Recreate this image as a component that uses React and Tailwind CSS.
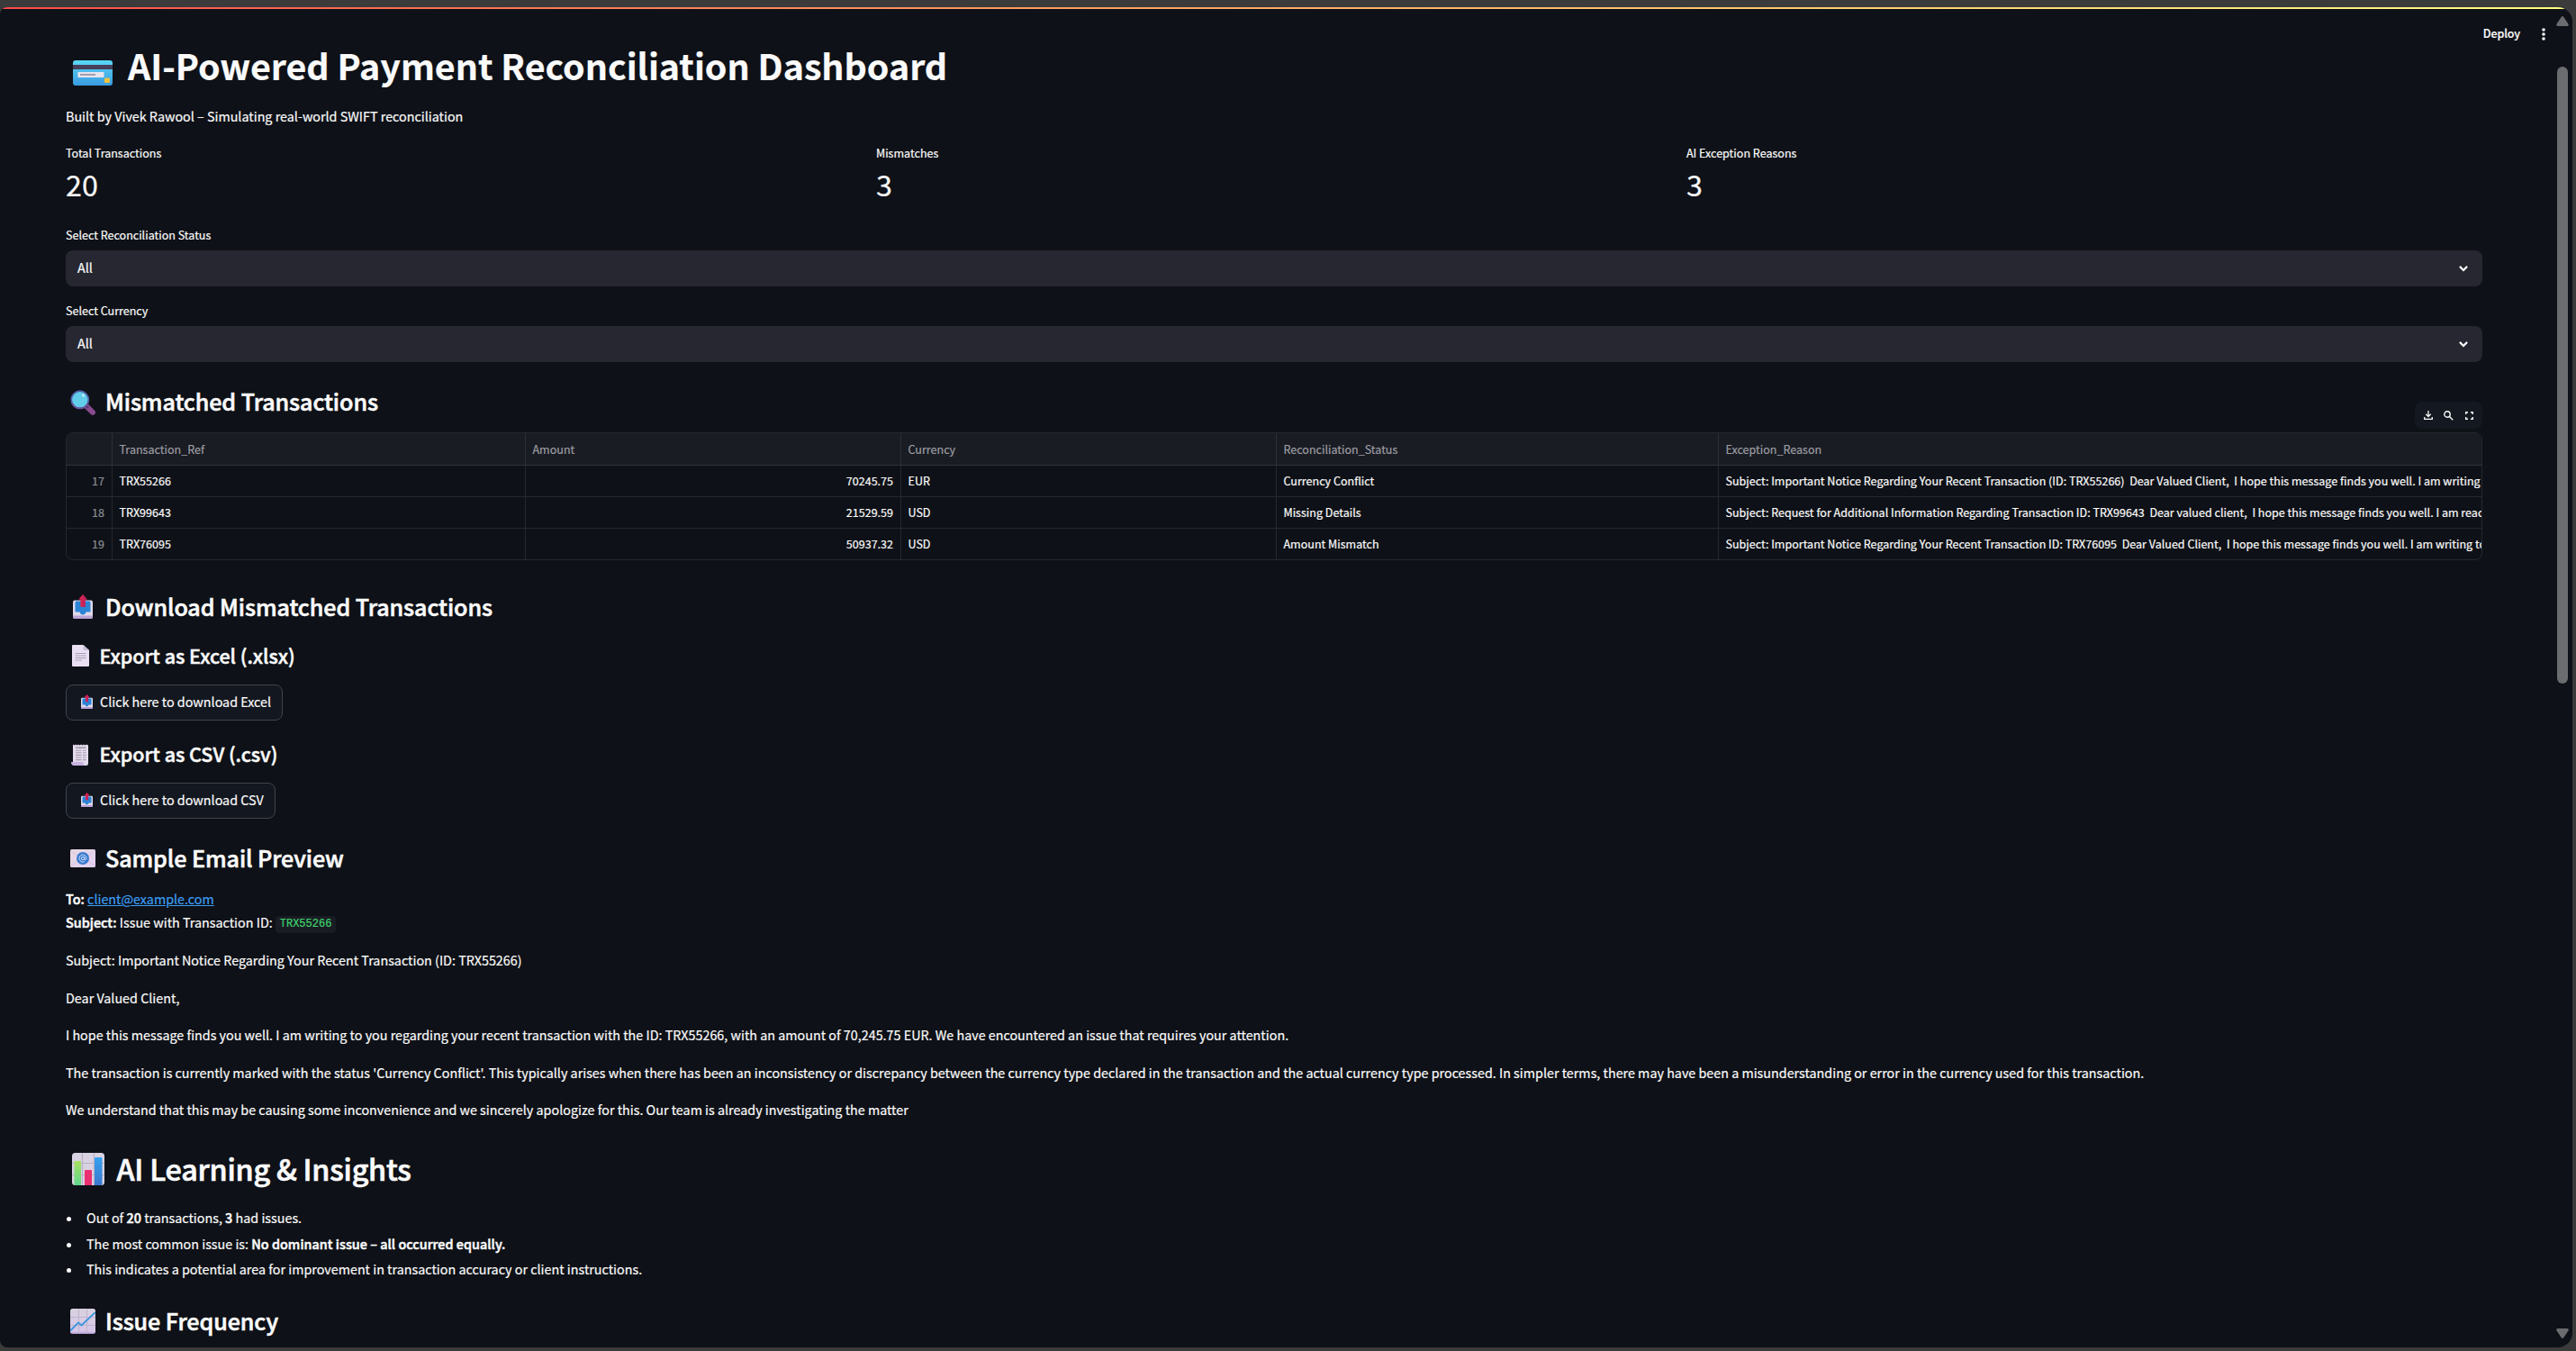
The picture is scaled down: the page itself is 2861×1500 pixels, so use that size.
import React from 'react';

function CardIcon() {
  return (
    <svg width="44" height="28" viewBox="0 0 44 28" className="ml-2 mt-[25px]">
      <defs>
        <linearGradient id="card" x1="0" y1="0" x2="0" y2="1">
          <stop offset="0" stopColor="#5ad8f5" />
          <stop offset="1" stopColor="#3a9be0" />
        </linearGradient>
      </defs>
      <rect width="44" height="28" rx="3" fill="url(#card)" />
      <rect y="5" width="44" height="5" fill="#46405a" />
      <rect x="5.5" y="13" width="29" height="6" rx="0.6" fill="#e6e4ee" />
      <rect x="8" y="15" width="17" height="1.8" fill="#9d98a8" />
      <rect x="35" y="19.5" width="6" height="5.5" rx="1.6" fill="#f5c33b" />
    </svg>
  );
}

function LensIcon() {
  return (
    <svg width="28" height="28" viewBox="0 0 28 28" className="ml-[5px] mt-[5px]">
      <path d="M18.5 18.5 L25 24.8" stroke="#8a4a8e" strokeWidth="6" strokeLinecap="round" />
      <path d="M17 17 L20 20" stroke="#5c3b78" strokeWidth="3" />
      <circle cx="10.8" cy="10.8" r="9.6" fill="#62cdea" stroke="#4d5fa6" strokeWidth="1.8" />
      <path d="M2 14.5 A9.6 9.6 0 0 0 19.5 14.8" fill="none" stroke="#70509a" strokeWidth="1.8" />
      <circle cx="14.6" cy="6" r="1.7" fill="#b4edf9" />
    </svg>
  );
}

function TrayIcon({ className, width, height }) {
  return (
    <svg width={width} height={height} viewBox="0 0 22 27" className={className}>
      <rect y="6.5" width="22" height="20.5" rx="2" fill="#e0d9ea" />
      <path d="M0 23.5 H22 V25 a2 2 0 0 1 -2 2 H2 a2 2 0 0 1 -2 -2 z" fill="#b9a3d3" />
      <path d="M2.5 9 a1.5 1.5 0 0 1 1.500 -1.500 H18 a1.500 1.500 0 0 1 1.500 1.500 V19.500 H14.500 C14 21.500 13 22.500 11 22.500 S8 21.500 7.500 19.500 H2.500 z" fill="#2b84d6" />
      <path d="M11 0 L15.800 5.600 H13.600 V13.800 H8.400 V5.600 H6.200 z" fill="#d9234f" />
      <path d="M11 0 L15.800 5.600 H13.600 V13.800 H11 z" fill="#c3215f" />
    </svg>
  );
}

function PageIcon() {
  return (
    <svg width="19" height="24" viewBox="0 0 19 24" className="ml-[7px] mt-[3px]">
      <path d="M1 0 H12.500 L19 6 V23 a1 1 0 0 1 -1 1 H1 a1 1 0 0 1 -1 -1 V1 a1 1 0 0 1 1 -1 z" fill="#e9e0f4" />
      <path d="M12.500 0 L19 6 H13.500 a1 1 0 0 1 -1 -1 z" fill="#c8bdd8" />
      <path d="M3.500 9.500 H15.500 M3.500 12 H15.500 M3.500 14.500 H15.500 M3.500 17 H11" stroke="#a89fb5" strokeWidth="1.100" />
    </svg>
  );
}

function ReceiptIcon() {
  return (
    <svg width="19" height="24" viewBox="0 0 19 24" className="ml-[6px] mt-1">
      <path d="M2 0.500 L3.500 1.500 L5 0.500 L6.500 1.500 L8 0.500 L9.500 1.500 L11 0.500 L12.500 1.500 L14 0.500 L15.500 1.500 L17 0.500 L19 1.500 V21.500 a2.500 2.500 0 0 1 -2.500 2.500 H4 L2 20 z" fill="#e4dcee" />
      <path d="M0 20 H13.500 C13.500 22.500 14.500 24 16.500 24 H3 C1 24 0 22.500 0 20 z" fill="#c9b3e2" />
      <path d="M5 4.200 H16.500" stroke="#8d8797" strokeWidth="1.300" />
      <path d="M5 7.200 H11.500 M13 7.200 H16.500 M5 9.800 H11.500 M13 9.800 H16.500 M5 12.400 H11.500 M13 12.400 H16.500 M5 15 H11.500 M13 15 H16.500 M5 17.600 H11.500 M13 17.600 H16.500" stroke="#a59eb0" strokeWidth="1.100" />
    </svg>
  );
}

function MailIcon() {
  return (
    <svg width="28" height="20" viewBox="0 0 28 20" className="ml-[5px] mt-2">
      <defs>
        <linearGradient id="mail" x1="0" y1="0" x2="1" y2="1">
          <stop offset="0" stopColor="#e9d9e0" />
          <stop offset="1" stopColor="#e2d0f5" />
        </linearGradient>
      </defs>
      <rect width="28" height="20" rx="1.500" fill="url(#mail)" />
      <path d="M0 1 L10 9 M28 1 L18 9 M0 19 L10 11 M28 19 L18 11" stroke="#cfc0dd" strokeWidth="0.800" />
      <circle cx="14" cy="10" r="7" fill="#3a7bd0" />
      <circle cx="14" cy="10" r="1.700" fill="none" stroke="#dfeafc" strokeWidth="0.900" />
      <path d="M15.700 8.300 V10.800 C15.700 12.200 18 12 18 10 A4 4 0 1 0 15.800 13.600" fill="none" stroke="#dfeafc" strokeWidth="0.900" />
    </svg>
  );
}

function BarsIcon() {
  return (
    <svg width="36" height="36" viewBox="0 0 36 36" className="ml-[7px] mt-[6px]">
      <defs>
        <linearGradient id="barG" x1="0" y1="0" x2="0" y2="1">
          <stop offset="0" stopColor="#a8e05f" />
          <stop offset="1" stopColor="#5fd68e" />
        </linearGradient>
        <linearGradient id="barB" x1="0" y1="0" x2="0" y2="1">
          <stop offset="0" stopColor="#35a3f0" />
          <stop offset="1" stopColor="#3b78cc" />
        </linearGradient>
      </defs>
      <rect width="36" height="36" rx="3.500" fill="#d9d2e2" />
      <path d="M11.500 0 V36 M24.500 0 V36 M0 11.500 H36 M0 24.500 H36" stroke="#b9b0c4" strokeWidth="1.200" />
      <path d="M2.500 10 a1 1 0 0 1 1 -1 H9 a1 1 0 0 1 1 1 V36 H3.500 a1 1 0 0 1 -1 -1 z" fill="url(#barG)" />
      <path d="M14 20 a1 1 0 0 1 1 -1 H21 a1 1 0 0 1 1 1 V36 H14 z" fill="#ec2f70" />
      <path d="M25 6 a1 1 0 0 1 1 -1 H32.500 a1 1 0 0 1 1 1 V35 a1 1 0 0 1 -1 1 H25 z" fill="url(#barB)" />
    </svg>
  );
}

function TrendIcon() {
  return (
    <svg width="28" height="28" viewBox="0 0 28 28" className="ml-[5px] mt-1">
      <defs>
        <linearGradient id="trend" x1="0" y1="0" x2="0" y2="1">
          <stop offset="0" stopColor="#d9d2df" />
          <stop offset="0.900" stopColor="#d6c6e8" />
          <stop offset="1" stopColor="#b095cf" />
        </linearGradient>
        <clipPath id="trendClip">
          <rect width="28" height="28" rx="2.500" />
        </clipPath>
      </defs>
      <g clipPath="url(#trendClip)">
        <rect width="28" height="28" fill="url(#trend)" />
        <path d="M9.500 0 V28 M18.500 0 V28 M0 9.500 H28 M0 18.500 H28" stroke="#bfb4cb" strokeWidth="1" />
        <path d="M0 24.500 L9 15.500 L12.500 18.500 L28 4" fill="none" stroke="#3f97dc" strokeWidth="2" />
      </g>
    </svg>
  );
}

function Select({ label }) {
  return (
    <div>
      <div className="h-[19px] text-[12.54px] leading-[19px]">{label}</div>
      <div className="mt-2 flex h-10 items-center justify-between rounded-lg bg-[#262730] pl-[13px] pr-4">
        <span className="pb-0.5 text-[14.34px] leading-6">All</span>
        <svg width="10" height="7" viewBox="0 0 10 7">
          <path d="M0.900 0.900 L5 5 L9.100 0.900" fill="none" stroke="#fafafa" strokeWidth="2.200" />
        </svg>
      </div>
    </div>
  );
}

function Metric({ label, value }) {
  return (
    <div>
      <div className="h-5 text-[12.54px] leading-5">{label}</div>
      <div className="mt-1 h-10 text-[32.26px] leading-10">{value}</div>
    </div>
  );
}

function Heading({ icon, children, className }) {
  return (
    <h3
      className={
        'flex h-[34px] text-[25.1px] leading-[34px] font-medium tracking-[-0.003em] [-webkit-text-stroke:0.6px] ' + className
      }
    >
      <span className="w-11 shrink-0">{icon}</span>
      {children}
    </h3>
  );
}

function SubHeading({ icon, children, className }) {
  return (
    <h4
      className={
        'flex h-[30px] text-[21.5px] leading-[30px] font-medium tracking-[-0.001em] [-webkit-text-stroke:0.5px] ' + className
      }
    >
      <span className="w-[37.500px] shrink-0">{icon}</span>
      {children}
    </h4>
  );
}

function Strong({ children }) {
  return <b className="font-medium tracking-[0.003em] [-webkit-text-stroke:0.5px]">{children}</b>;
}

function DownloadButton({ children, className }) {
  return (
    <button
      className={
        'mt-[17px] flex h-10 rounded-lg border border-[#41444c] bg-[#13171f] text-[14.34px] leading-[36px] ' + className
      }
    >
      <TrayIcon className="ml-4 mt-[10px]" width="13" height="16" />
      <span className="ml-2">{children}</span>
    </button>
  );
}

const rows = [
  ['17', 'TRX55266', '70245.75', 'EUR', 'Currency Conflict', 'Subject: Important Notice Regarding Your Recent Transaction (ID: TRX55266)  Dear Valued Client,  I hope this message finds you well. I am writing to'],
  ['18', 'TRX99643', '21529.59', 'USD', 'Missing Details', 'Subject: Request for Additional Information Regarding Transaction ID: TRX99643  Dear valued client,  I hope this message finds you well. I am reaching'],
  ['19', 'TRX76095', '50937.32', 'USD', 'Amount Mismatch', 'Subject: Important Notice Regarding Your Recent Transaction ID: TRX76095  Dear Valued Client,  I hope this message finds you well. I am writing to'],
];

function Table() {
  return (
    <div className="relative mt-[18px]">
      <div className="h-[142px] overflow-hidden rounded-lg border border-[#25282f] text-[12.54px]">
        <div className="grid h-9 grid-cols-[51px_459px_417px_417px_491px_1fr] border-b border-[#30333a] bg-[#1a1c24] leading-[35px] text-[#9c9da1]">
          <div className="border-r border-[#2c2f36]" />
          <div className="border-r border-[#2c2f36] pl-[7.500px]">Transaction_Ref</div>
          <div className="border-r border-[#2c2f36] pl-[7.500px]">Amount</div>
          <div className="border-r border-[#2c2f36] pl-[7.500px]">Currency</div>
          <div className="border-r border-[#2c2f36] pl-[7.500px]">Reconciliation_Status</div>
          <div className="pl-[7.500px]">Exception_Reason</div>
        </div>
        {rows.map((r) => (
          <div
            key={r[0]}
            className="grid h-[35px] grid-cols-[51px_459px_417px_417px_491px_1fr] border-b border-[#25282f] leading-[34px]"
          >
            <div className="border-r border-[#25282f] pr-2 text-right text-[#8d8f94]">{r[0]}</div>
            <div className="border-r border-[#25282f] pl-[7.500px]">{r[1]}</div>
            <div className="border-r border-[#25282f] pr-2 text-right">{r[2]}</div>
            <div className="border-r border-[#25282f] pl-[7.500px]">{r[3]}</div>
            <div className="border-r border-[#25282f] pl-[7.500px]">{r[4]}</div>
            <div className="min-w-0 overflow-hidden pl-[7.500px] whitespace-pre">{r[5]}</div>
          </div>
        ))}
      </div>
      <div className="absolute -top-[34px] right-0 flex h-[30px] w-[75px] rounded-lg bg-[#141820] pt-[10px] pl-[10px]">
        <svg width="10" height="10" viewBox="0 0 10 10" fill="none" stroke="#fafafa" strokeWidth="1.300">
          <path d="M5 0 V6.300 M2.300 3.800 L5 6.500 L7.700 3.800 M0.700 7 V9.300 H9.300 V7" />
        </svg>
        <svg width="11" height="11" viewBox="0 0 11 11" className="ml-[11.500px]" fill="none" stroke="#fafafa" strokeWidth="1.400">
          <circle cx="4" cy="4" r="3.200" />
          <path d="M6.300 6.300 L10.200 10.200" />
        </svg>
        <svg width="9" height="9" viewBox="0 0 9 9" className="mt-px ml-[13px]" fill="none" stroke="#fafafa" strokeWidth="1.400">
          <path d="M0.700 3 V0.700 H3 M6 0.700 H8.300 V3 M8.300 6 V8.300 H6 M3 8.300 H0.700 V6" />
        </svg>
      </div>
    </div>
  );
}

function Bullet({ children }) {
  return (
    <li className="flex h-[28.6px] items-center">
      <span className="mt-[3px] ml-px h-[5px] w-[5px] rounded-full bg-[#fafafa]" />
      <span className="ml-[17px] leading-[28.6px] whitespace-pre">{children}</span>
    </li>
  );
}

export default function App() {
  return (
    <div className="h-[1500px] w-[2861px] overflow-hidden bg-[#3b3b3b] pt-2 pr-1 pb-1 font-['Noto_Sans_CJK_SC',sans-serif] text-[14.34px] text-[#fafafa] [-webkit-text-stroke:0.2px]">
      <div className="relative flex h-[1488px] flex-col overflow-hidden rounded-l-lg rounded-r-2xl bg-[#0e1117]">
        <div className="h-0.5 shrink-0 bg-linear-to-r from-[#ff4b4b] to-[#fffd80]" />
        <div className="absolute top-[18px] right-[30px] flex h-[22px] items-center text-[12.54px] leading-[22px] font-medium">
          <span className="tracking-[-0.01em]">Deploy</span>
          <svg width="4" height="14" viewBox="0 0 4 14" className="mt-px ml-6" fill="#fafafa">
            <circle cx="2" cy="2" r="1.800" />
            <circle cx="2" cy="7" r="1.800" />
            <circle cx="2" cy="12" r="1.800" />
          </svg>
        </div>
        <div className="flex min-h-0 flex-1">
          <main className="w-[2837px] overflow-hidden pl-[73px] pr-20">
            <h1 className="mt-8 flex h-[60px] text-[39.4px] leading-[60px] font-bold tracking-[-0.001em]">
              <span className="w-[69px] shrink-0">
                <CardIcon />
              </span>
              AI-Powered Payment Reconciliation Dashboard
            </h1>
            <p className="mt-[14px] h-[26px] leading-[26px]">
              Built by Vivek Rawool – Simulating real-world SWIFT reconciliation
            </p>
            <div className="mt-[18px] mb-[27px] grid grid-cols-3 gap-4">
              <Metric label="Total Transactions" value="20" />
              <Metric label="Mismatches" value="3" />
              <Metric label="AI Exception Reasons" value="3" />
            </div>
            <div className="flex flex-col gap-[17px]">
              <Select label="Select Reconciliation Status" />
              <Select label="Select Currency" />
            </div>
            <Heading className="mt-[26px]" icon={<LensIcon />}>Mismatched Transactions</Heading>
            <Table />
            <Heading className="mt-[34px]" icon={<TrayIcon className="ml-2 mt-1" width="22" height="27" />}>
              Download Mismatched Transactions
            </Heading>
            <SubHeading className="mt-[23px]" icon={<PageIcon />}>Export as Excel (.xlsx)</SubHeading>
            <DownloadButton className="w-[241px]">Click here to download Excel</DownloadButton>
            <SubHeading className="mt-[22px]" icon={<ReceiptIcon />}>Export as CSV (.csv)</SubHeading>
            <DownloadButton className="w-[233px]">Click here to download CSV</DownloadButton>
            <Heading className="mt-[26px]" icon={<MailIcon />}>Sample Email Preview</Heading>
            <div className="mt-4">
              <div className="h-[26px] leading-[26px]">
                <Strong>To:</Strong> <a className="text-[#3d9df3] underline">client@example.com</a>
              </div>
              <div className="flex h-[26px] items-center leading-[26px] whitespace-pre">
                <Strong>Subject:</Strong> Issue with Transaction ID:
                <code className="mt-1 ml-[3px] h-[19px] rounded bg-[#1a1c24] px-[5px] font-['Liberation_Mono',monospace] text-[12px] leading-[19px] text-[#3dd56d]">
                  TRX55266
                </code>
              </div>
            </div>
            <div className="mt-4 flex flex-col gap-4 leading-[25.5px]">
              <p>Subject: Important Notice Regarding Your Recent Transaction (ID: TRX55266)</p>
              <p>Dear Valued Client,</p>
              <p>I hope this message finds you well. I am writing to you regarding your recent transaction with the ID: TRX55266, with an amount of 70,245.75 EUR. We have encountered an issue that requires your attention.</p>
              <p>The transaction is currently marked with the status 'Currency Conflict'. This typically arises when there has been an inconsistency or discrepancy between the currency type declared in the transaction and the actual currency type processed. In simpler terms, there may have been a misunderstanding or error in the currency used for this transaction.</p>
              <p>We understand that this may be causing some inconvenience and we sincerely apologize for this. Our team is already investigating the matter</p>
            </div>
            <h2 className="mt-[29.500px] flex h-[46px] text-[32.26px] leading-[46px] font-medium tracking-[-0.006em] [-webkit-text-stroke:0.7px]">
              <span className="w-[56.500px] shrink-0">
                <BarsIcon />
              </span>
              AI Learning &amp; Insights
            </h2>
            <ul className="mt-[18px]">
              <Bullet>Out of <Strong>20</Strong> transactions, <Strong>3</Strong> had issues.</Bullet>
              <Bullet>The most common issue is: <Strong>No dominant issue – all occurred equally.</Strong></Bullet>
              <Bullet>This indicates a potential area for improvement in transaction accuracy or client instructions.</Bullet>
            </ul>
            <Heading className="mt-[25.200px]" icon={<TrendIcon />}>Issue Frequency</Heading>
          </main>
          <div className="flex w-5 flex-col items-center pl-px">
            <svg width="14" height="11" viewBox="0 0 14 11" className="mt-2 mr-1 shrink-0" fill="#6b6c70">
              <path d="M5.800 0.800 Q7 -0.600 8.200 0.800 L13.400 8.500 Q14.400 10.800 12.400 11 H1.600 Q-0.400 10.800 0.600 8.500 z" />
            </svg>
            <div className="mt-[45px] mr-1 h-[685px] w-3 shrink-0 rounded-full bg-[#6b6c70]" />
            <svg width="14" height="11" viewBox="0 0 14 11" className="mt-auto mr-1 mb-[10px] shrink-0" fill="#6b6c70">
              <path d="M5.800 10.200 Q7 11.600 8.200 10.200 L13.400 2.500 Q14.400 0.200 12.400 0 H1.600 Q-0.400 0.200 0.600 2.500 z" />
            </svg>
          </div>
        </div>
      </div>
    </div>
  );
}
